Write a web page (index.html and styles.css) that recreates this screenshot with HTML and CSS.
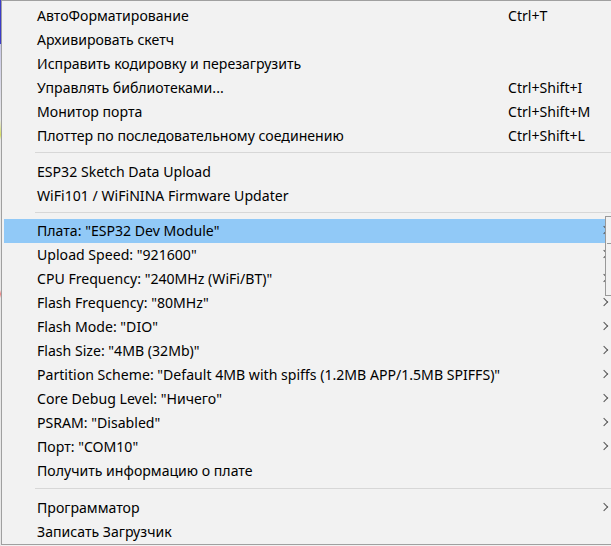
FILE: index.html
```html
<!DOCTYPE html>
<html lang="ru">
<head>
<meta charset="utf-8">
<link rel="stylesheet" href="styles.css">
</head>
<body>
<div class="stage">
  <div class="edge"></div>
  <div class="menu">
    <div class="item"><span class="label">АвтоФорматирование</span><span class="key">Ctrl+T</span></div>
    <div class="item"><span class="label">Архивировать скетч</span></div>
    <div class="item"><span class="label">Исправить кодировку и перезагрузить</span></div>
    <div class="item"><span class="label">Управлять библиотеками...</span><span class="key">Ctrl+Shift+I</span></div>
    <div class="item"><span class="label">Монитор порта</span><span class="key">Ctrl+Shift+M</span></div>
    <div class="item"><span class="label">Плоттер по последовательному соединению</span><span class="key">Ctrl+Shift+L</span></div>
    <div class="sep"></div>
    <div class="item"><span class="label">ESP32 Sketch Data Upload</span></div>
    <div class="item"><span class="label">WiFi101 / WiFiNINA Firmware Updater</span></div>
    <div class="sep sep-narrow"></div>
    <div class="item active sub"><span class="label">Плата: "ESP32 Dev Module"</span></div>
    <div class="item sub"><span class="label">Upload Speed: "921600"</span></div>
    <div class="item sub"><span class="label">CPU Frequency: "240MHz (WiFi/BT)"</span></div>
    <div class="item sub"><span class="label">Flash Frequency: "80MHz"</span></div>
    <div class="item sub"><span class="label">Flash Mode: "DIO"</span></div>
    <div class="item sub"><span class="label">Flash Size: "4MB (32Mb)"</span></div>
    <div class="item sub"><span class="label">Partition Scheme: "Default 4MB with spiffs (1.2MB APP/1.5MB SPIFFS)"</span></div>
    <div class="item sub"><span class="label">Core Debug Level: "Ничего"</span></div>
    <div class="item sub"><span class="label">PSRAM: "Disabled"</span></div>
    <div class="item sub"><span class="label">Порт: "COM10"</span></div>
    <div class="item"><span class="label">Получить информацию о плате</span></div>
    <div class="sep sep-wide"></div>
    <div class="item sub"><span class="label">Программатор</span></div>
    <div class="item"><span class="label">Записать Загрузчик</span></div>
  </div>
  <div class="submenu-edge"></div>
</div>
</body>
</html>
```
FILE: styles.css
```css
html, body {
  margin: 0;
  padding: 0;
  background: #f2f2f2;
  overflow: hidden;
}
.stage {
  position: relative;
  display: flex;
  width: 611px;
  height: 546px;
  overflow: hidden;
}
.edge {
  flex: 0 0 1px;
  background: linear-gradient(to bottom, #3c3cc8 0, #3c3cc8 44px, #c8c8e8 44px, #e8e8e8 120px, #d8e060 135px, #e8e8e8 140px, #e8e8e8 290px, #f08080 294px, #e8e8e8 298px);
}
.menu {
  flex: 0 0 640px;
  height: 545px;
  box-sizing: border-box;
  border-top: 1px solid #a0a0a0;
  border-left: 1px solid #a0a0a0;
  border-bottom: 1px solid #a0a0a0;
  background: #f2f2f2;
  padding: 3px 0 0 2px;
  font-family: "Noto Sans", "Open Sans", sans-serif;
  font-size: 14.1px;
  color: #000;
}
.item {
  position: relative;
  height: 24px;
  display: flex;
  align-items: center;
  padding-left: 33px;
  padding-bottom: 2px;
  width: 601px;
  box-sizing: border-box;
}
.item.active {
  background: #91c9f7;
}
.label {
  flex: 1;
  white-space: nowrap;
}
.key {
  position: absolute;
  left: 504px;
  white-space: nowrap;
}
.sub::after {
  content: "";
  position: absolute;
  left: 597px;
  top: 8px;
  width: 5px;
  height: 5px;
  border-top: 1px solid #555;
  border-right: 1px solid #555;
  transform: rotate(45deg);
  transform-origin: center;
}
.sep {
  height: 12px;
  box-sizing: border-box;
  padding-top: 4px;
  margin-left: 31px;
  width: 600px;
}
.sep::before {
  content: "";
  display: block;
  height: 1px;
  background: #d7d7d7;
}
.sep-narrow {
  height: 11px;
}
.sep-wide {
  height: 13px;
  padding-top: 5px;
}
.submenu-edge {
  position: absolute;
  left: 605px;
  top: 216px;
  width: 10px;
  height: 78px;
  border-left: 1px solid #999;
  border-top: 1px solid #999;
  border-bottom: 1px solid #999;
  background: #f2f2f2;
}
.submenu-edge::after {
  content: "";
  position: absolute;
  left: 1px;
  top: 26px;
  width: 10px;
  height: 1px;
  background: #999;
}
```
